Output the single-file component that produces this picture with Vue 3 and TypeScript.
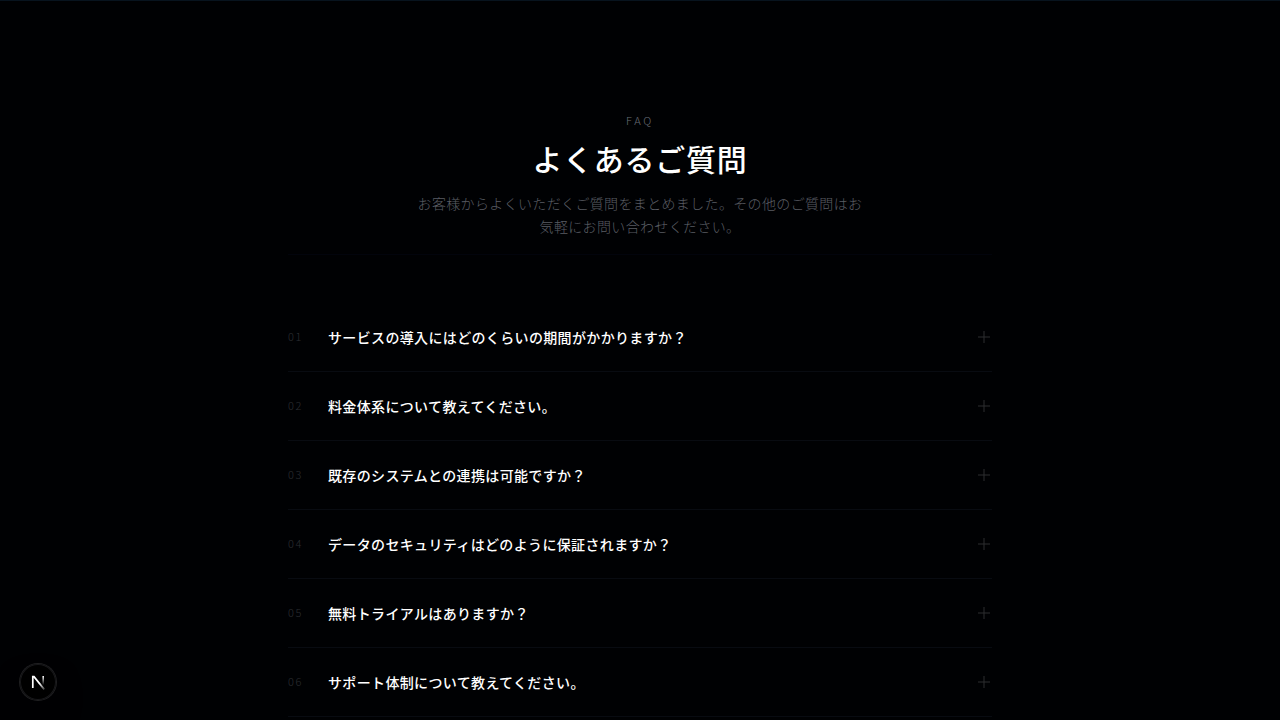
<script setup lang="ts">
import { ref } from 'vue'

interface Question {
  id: string
  text: string
}

const questions: Question[] = [
  { id: '01', text: 'サービスの導入にはどのくらいの期間がかかりますか？' },
  { id: '02', text: '料金体系について教えてください。' },
  { id: '03', text: '既存のシステムとの連携は可能ですか？' },
  { id: '04', text: 'データのセキュリティはどのように保証されますか？' },
  { id: '05', text: '無料トライアルはありますか？' },
  { id: '06', text: 'サポート体制について教えてください。' },
]

const selected = ref<string | null>(null)
</script>

<template>
  <main class="page">
    <section class="faq">
      <header class="intro">
        <p class="eyebrow">FAQ</p>
        <h1 class="title">よくあるご質問</h1>
        <p class="lead">お客様からよくいただくご質問をまとめました。その他のご質問はお気軽にお問い合わせください。</p>
      </header>
      <ul class="list">
        <li v-for="q in questions" :key="q.id" class="item">
          <button type="button" class="question" @click="selected = q.id">
            <span class="number">{{ q.id }}</span>
            <span class="text">{{ q.text }}</span>
            <svg class="plus" viewBox="0 0 16 16" aria-hidden="true">
              <path d="M8 2v12M2 8h12" />
            </svg>
          </button>
        </li>
      </ul>
    </section>
    <button type="button" class="badge" aria-label="Next.js">
      <svg width="36" height="36" viewBox="0 0 36 36" fill="none" aria-hidden="true">
        <defs>
          <linearGradient id="diag" x1="20" y1="19" x2="24" y2="25" gradientUnits="userSpaceOnUse">
            <stop stop-color="#fff" />
            <stop offset="1" stop-color="#fff" stop-opacity="0.3" />
          </linearGradient>
          <linearGradient id="stem" x1="23" y1="12" x2="23" y2="21" gradientUnits="userSpaceOnUse">
            <stop stop-color="#fff" />
            <stop offset="1" stop-color="#fff" stop-opacity="0" />
          </linearGradient>
        </defs>
        <path d="M12.8 24V12.6h1.2L24.2 25.4" stroke="url(#diag)" stroke-width="1.7" />
        <path d="M23.2 12v9" stroke="url(#stem)" stroke-width="1.6" />
      </svg>
    </button>
  </main>
</template>

<style>
html,
body {
  background: #000103;
}
body {
  margin: 0;
  overflow: hidden;
}
</style>

<style scoped>
.page {
  box-sizing: border-box;
  min-height: 100vh;
  border-top: 1px solid #07131e;
  color: #fff;
  background: #000103;
  font-family: "Noto Sans CJK JP", sans-serif;
}
.faq {
  box-sizing: border-box;
  max-width: 768px;
  margin: 0 auto;
  padding: 112px 32px 0;
}
.intro {
  padding-bottom: 16px;
  border-bottom: 1px solid #02040c;
  text-align: center;
}
.eyebrow {
  margin: 0 0 10px;
  color: #6a6e77;
  font-size: 11px;
  font-weight: 300;
  line-height: 15px;
  letter-spacing: 0.25em;
}
.title {
  margin: 0 0 14px;
  font-size: 30px;
  font-weight: 500;
  line-height: 40px;
  letter-spacing: 0.025em;
}
.lead {
  max-width: 448px;
  margin: 0 auto;
  color: #5a5d63;
  font-size: 14px;
  font-weight: 300;
  line-height: 23px;
  letter-spacing: 0.025em;
}
.list {
  margin: 48px 0 0;
  padding: 0;
  list-style: none;
}
.item {
  border-bottom: 1px solid #080b11;
}
.question {
  display: flex;
  align-items: center;
  width: 100%;
  padding: 24px 0;
  border: 0;
  color: inherit;
  background: none;
  font: inherit;
  text-align: left;
  cursor: pointer;
}
.number {
  flex: none;
  width: 40px;
  padding-bottom: 2px;
  color: #2c2e32;
  font-size: 11px;
  font-weight: 300;
  line-height: 16px;
  letter-spacing: 0.15em;
}
.text {
  flex: 1;
  font-size: 14px;
  font-weight: 500;
  line-height: 20px;
  letter-spacing: 0.025em;
}
.plus {
  flex: none;
  width: 16px;
  height: 16px;
  stroke: #2d2e30;
  stroke-width: 1;
}
.badge {
  position: fixed;
  bottom: 20px;
  left: 20px;
  display: flex;
  width: 36px;
  height: 36px;
  padding: 0;
  border: 0;
  border-radius: 50%;
  background: #000;
  box-shadow: 0 0 0 1px #1f1f21, inset 0 0 0 1px #18181a, 0 16px 32px -8px #000;
  cursor: pointer;
}
</style>
